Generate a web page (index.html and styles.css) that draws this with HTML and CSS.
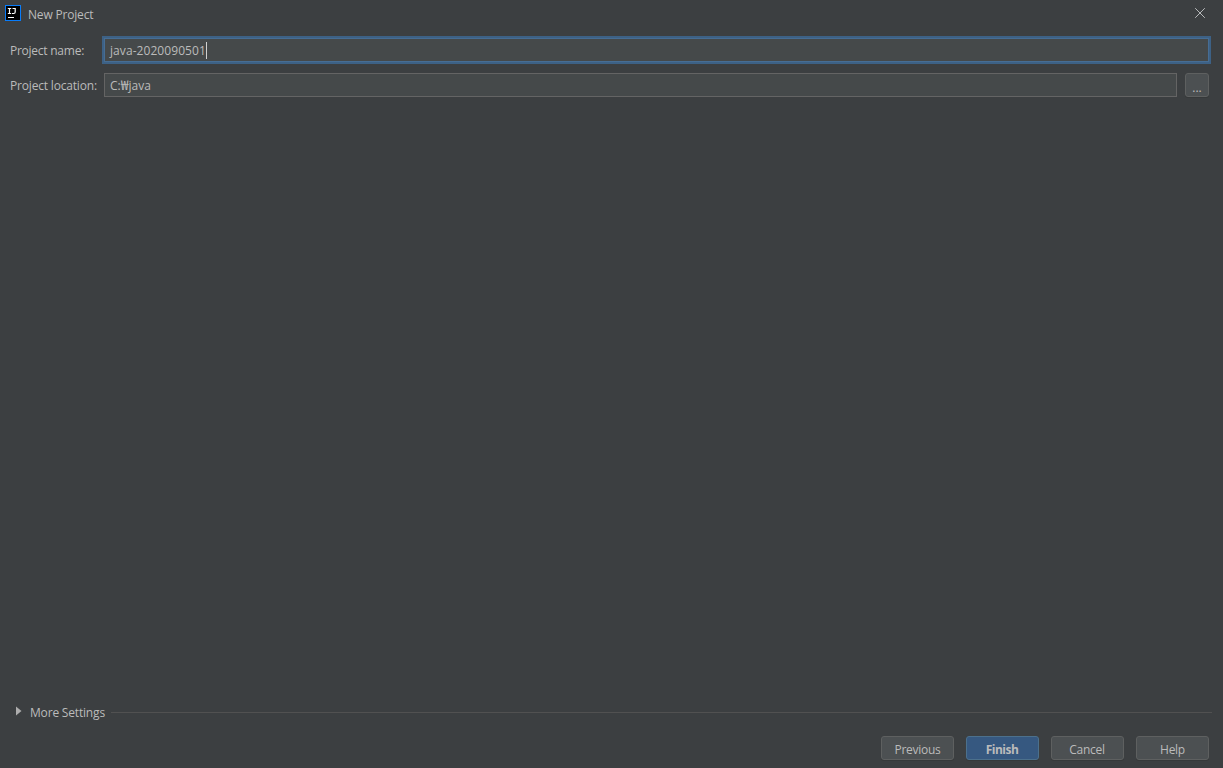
FILE: index.html
```html
<!DOCTYPE html>
<html lang="en">
<head>
    <meta charset="UTF-8">
    <title>New Project</title>
    <link rel="stylesheet" href="styles.css">
</head>
<body>
    <div class="dialog">
        <header class="title-bar">
            <svg class="logo" width="16" height="16" viewBox="0 0 16 16">
                <rect width="16" height="16" fill="#087cfa"/>
                <rect x="1" y="1" width="14" height="14" fill="#000"/>
                <path d="M2.8 3.5h3.4M4.5 3v6M2.8 8.5h3.4M7.5 3.5h3M10.2 3v4q0 1.5-1.5 1.5H7" fill="none" stroke="#fff" stroke-width="1.2"/>
                <rect x="3" y="12" width="6" height="1" fill="#fff"/>
            </svg>
            <span class="title">New Project</span>
            <svg class="close" width="10" height="10" viewBox="0 0 10 10">
                <path d="M.2.2l9.6 9.6M9.8.2L.2 9.8" stroke="#b8babb" fill="none"/>
            </svg>
        </header>
        <main class="form">
            <div class="row">
                <label class="name-label">Project name:</label>
                <div class="field focused"><span class="name-value">java-2020090501</span><span class="caret"></span></div>
            </div>
            <div class="row">
                <label class="location-label">Project location:</label>
                <div class="field"><span class="location-value">C:<span class="won">₩</span>java</span></div>
                <button class="browse">...</button>
            </div>
        </main>
        <div class="more">
            <svg width="6" height="10" viewBox="0 0 6 10"><path d="M0 .5v9L5.5 5z" fill="#adadad"/></svg>
            <span class="more-text">More Settings</span>
            <span class="line"></span>
        </div>
        <footer class="buttons">
            <button>Previous</button>
            <button class="primary">Finish</button>
            <button class="cancel">Cancel</button>
            <button>Help</button>
        </footer>
    </div>
</body>
</html>
```
FILE: styles.css
```css
* {
    box-sizing: border-box;
}
body {
    margin: 0;
    background-color: #3c3f41;
    color: #bbbbbb;
    font-family: 'Open Sans', 'Noto Sans CJK KR', sans-serif;
    font-size: 12px;
    line-height: 16px;
    letter-spacing: -0.18px;
}
.dialog {
    display: flex;
    flex-direction: column;
    height: 768px;
}
.title-bar {
    display: flex;
    align-items: center;
    height: 28px;
    padding: 0 18px 0 5px;
}
.logo {
    margin-bottom: 2px;
}
.title {
    margin-left: 7px;
    padding-top: 2px;
}
.close {
    margin: 0 0 2px auto;
}
.form {
    display: flex;
    flex-direction: column;
    gap: 11px;
    padding: 10px 14px 0 10px;
}
.row {
    display: flex;
    align-items: center;
    height: 24px;
}
label {
    width: 94px;
    padding-top: 2px;
    white-space: nowrap;
}
.name-label {
    letter-spacing: -0.25px;
}
.field {
    display: flex;
    flex: 1;
    align-items: center;
    height: 24px;
    padding-left: 5px;
    background-color: #45494a;
    border: 1px solid #646464;
}
.focused {
    border-color: #466d94;
    box-shadow: 0 0 0 2px #3d6185;
}
.name-value {
    padding-top: 2px;
    letter-spacing: 0.07px;
}
.location-value {
    letter-spacing: 0;
}
.won {
    font-family: 'Noto Sans CJK KR', sans-serif;
    font-size: 14px;
    line-height: 1;
}
.caret {
    width: 1px;
    height: 17px;
    background-color: #d0d0d0;
}
button {
    width: 73px;
    height: 24px;
    padding: 4px 0 0;
    color: #bbbbbb;
    font: inherit;
    letter-spacing: -0.3px;
    background-color: #4c5052;
    border: 1px solid #5e6060;
    border-radius: 3px;
    box-shadow: 0 1px 0 #36393a;
}
.browse {
    width: 24px;
    margin-left: 8px;
    padding: 5px 0 0;
    letter-spacing: 0;
}
.primary {
    padding-right: 1px;
    font-weight: bold;
    letter-spacing: -0.5px;
    background-color: #365880;
    border-color: #4c708c;
}
.cancel {
    padding-right: 1px;
}
.more {
    display: flex;
    align-items: center;
    height: 16px;
    margin-top: auto;
    padding: 0 11px 0 16px;
}
.more svg {
    margin-bottom: 4px;
}
.more-text {
    margin: 0 6px 0 8px;
}
.line {
    flex: 1;
    height: 1px;
    margin-bottom: 2px;
    background-color: #515151;
}
.buttons {
    display: flex;
    justify-content: flex-end;
    gap: 12px;
    padding: 15px 14px 8px 0;
}
```
